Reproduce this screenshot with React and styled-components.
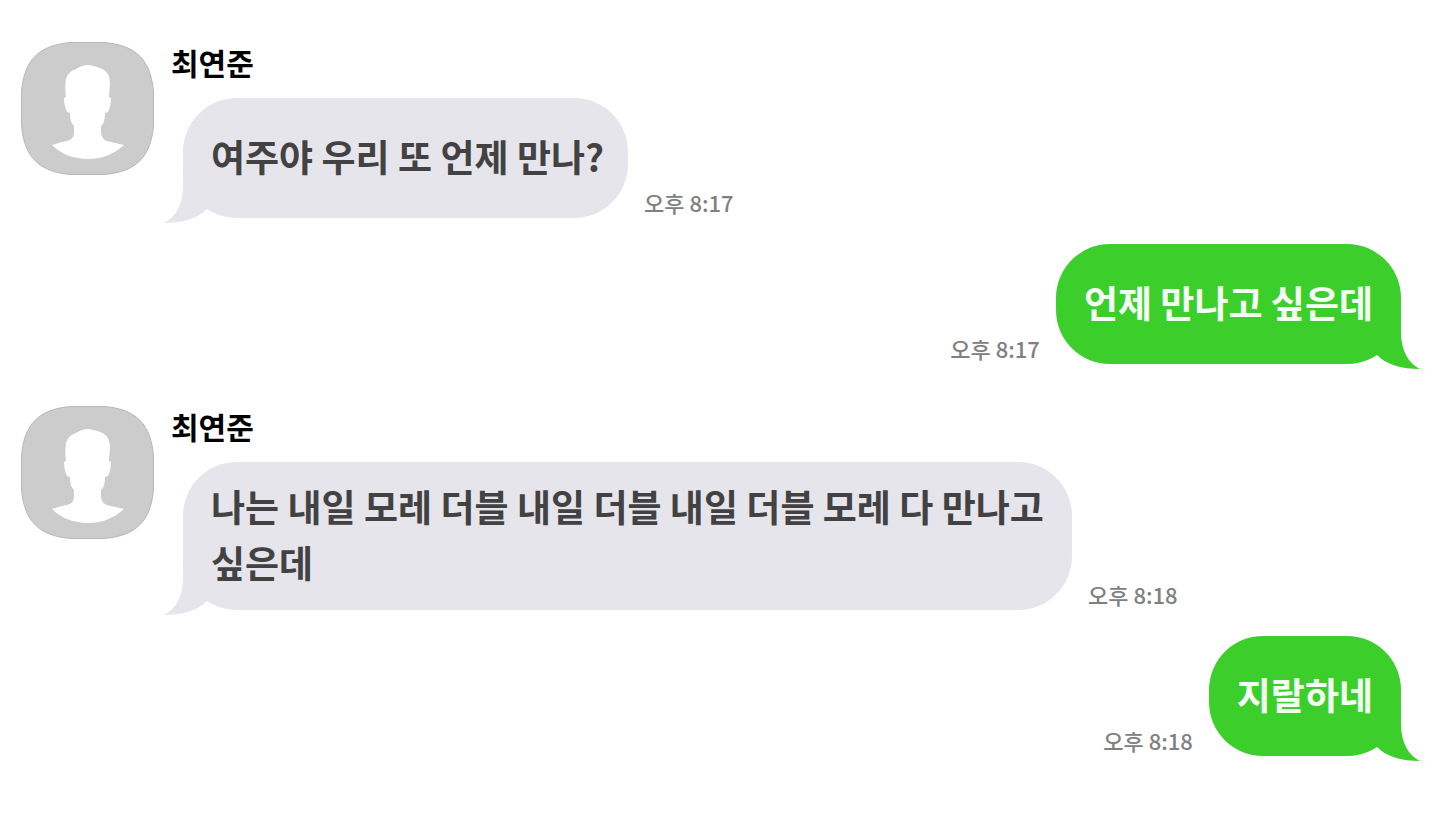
import React from "react";
import styled, { createGlobalStyle } from "styled-components";

const messages = [
  { id: 1, sender: "최연준", text: "여주야 우리 또 언제 만나?", time: "오후 8:17" },
  { id: 2, mine: true, text: "언제 만나고 싶은데", time: "오후 8:17" },
  {
    id: 3,
    sender: "최연준",
    text: "나는 내일 모레 더블 내일 더블 내일 더블 모레 다 만나고 싶은데",
    time: "오후 8:18",
  },
  { id: 4, mine: true, text: "지랄하네", time: "오후 8:18" },
];

const Avatar = () => (
  <AvatarIcon viewBox="0 0 133 133" aria-hidden="true">
    <path
      d="M50 .5H83C116 3 130 19 132.5 50V83C130 115 115 130 83 132.5H50C18 130 3 115 .5 83V50C3 18 18 3 50 .5Z"
      fill="#cccccc"
      stroke="#b8b8b8"
    />
    <path
      d="M67 23C71 23 75 25 79 26C86 28 89 34 89 41L88 55L90 56C90 61 89 66 87 70L84 71C84 77 83 82 80 84V91C81 97 84 99 90 100L103 103C92 113 80 117 67 117C53 117 40 112 31 103L41 100C49 99 52 97 53 92V84C50 81 49 77 49 71L46 70C44 66 43 61 43 56L45 55C44 48 44 43 45 37C47 31 50 29 55 27C59 25 62 23 67 23Z"
      fill="#ffffff"
    />
  </AvatarIcon>
);

const Message = ({ message }) => {
  const { mine, sender, text, time } = message;

  return (
    <Row $mine={mine}>
      {!mine && <Avatar />}
      <Content>
        {!mine && <Sender>{sender}</Sender>}
        <BubbleRow $mine={mine}>
          <Bubble $mine={mine}>
            {text}
            <Tail $mine={mine} viewBox="0 0 60 66" aria-hidden="true">
              <path d="M19 0V28C19 46 12 59 0 65C18 65 33 61 43 51L60 40V0Z" />
            </Tail>
          </Bubble>
          <Time>{time}</Time>
        </BubbleRow>
      </Content>
    </Row>
  );
};

const App = () => {
  return (
    <>
      <GlobalStyle />
      <Chat>
        {messages.map((message) => (
          <Message key={message.id} message={message} />
        ))}
      </Chat>
    </>
  );
};

export default App;

const GlobalStyle = createGlobalStyle`
  * {
    box-sizing: border-box;
  }
  body {
    margin: 0;
    background: #ffffff;
    font-family: "Noto Sans CJK KR", sans-serif;
  }
`;

const Chat = styled.main`
  padding: 0 39px 42px 21px;
`;

const Row = styled.div`
  display: flex;
  align-items: flex-start;
  justify-content: ${({ $mine }) => ($mine ? "flex-end" : "flex-start")};
  gap: 17px;
  padding-top: ${({ $mine }) => ($mine ? "26px" : "42px")};
`;

const AvatarIcon = styled.svg`
  flex: none;
  width: 133px;
  height: 133px;
`;

const Content = styled.div`
  min-width: 0;
`;

const Sender = styled.div`
  margin-bottom: 16px;
  font-size: 30px;
  font-weight: 700;
  line-height: 40px;
  color: #000000;
`;

const BubbleRow = styled.div`
  display: flex;
  flex-direction: ${({ $mine }) => ($mine ? "row-reverse" : "row")};
  align-items: flex-end;
  gap: 16px;
  margin-left: ${({ $mine }) => ($mine ? "0" : "12px")};
`;

const Bubble = styled.div`
  position: relative;
  display: flex;
  align-items: center;
  max-width: 889px;
  min-height: 120px;
  padding: ${({ $mine }) => ($mine ? "16px 28px 20px" : "16px 24px 20px 28px")};
  border-radius: 54px;
  background: ${({ $mine }) => ($mine ? "#3ccf2c" : "#e6e5eb")};
  color: ${({ $mine }) => ($mine ? "#f6fff5" : "#424242")};
  font-size: 37px;
  font-weight: 700;
  line-height: 56px;
  word-break: keep-all;
`;

const Tail = styled.svg`
  position: absolute;
  bottom: -6px;
  left: ${({ $mine }) => ($mine ? "auto" : "-19px")};
  right: ${({ $mine }) => ($mine ? "-19px" : "auto")};
  width: 60px;
  height: 66px;
  transform: ${({ $mine }) => ($mine ? "scaleX(-1)" : "none")};
  fill: ${({ $mine }) => ($mine ? "#3ccf2c" : "#e6e5eb")};
  z-index: -1;
`;

const Time = styled.span`
  flex: none;
  font-size: 22px;
  font-weight: 500;
  line-height: 32px;
  color: #808080;
  white-space: nowrap;
`;
